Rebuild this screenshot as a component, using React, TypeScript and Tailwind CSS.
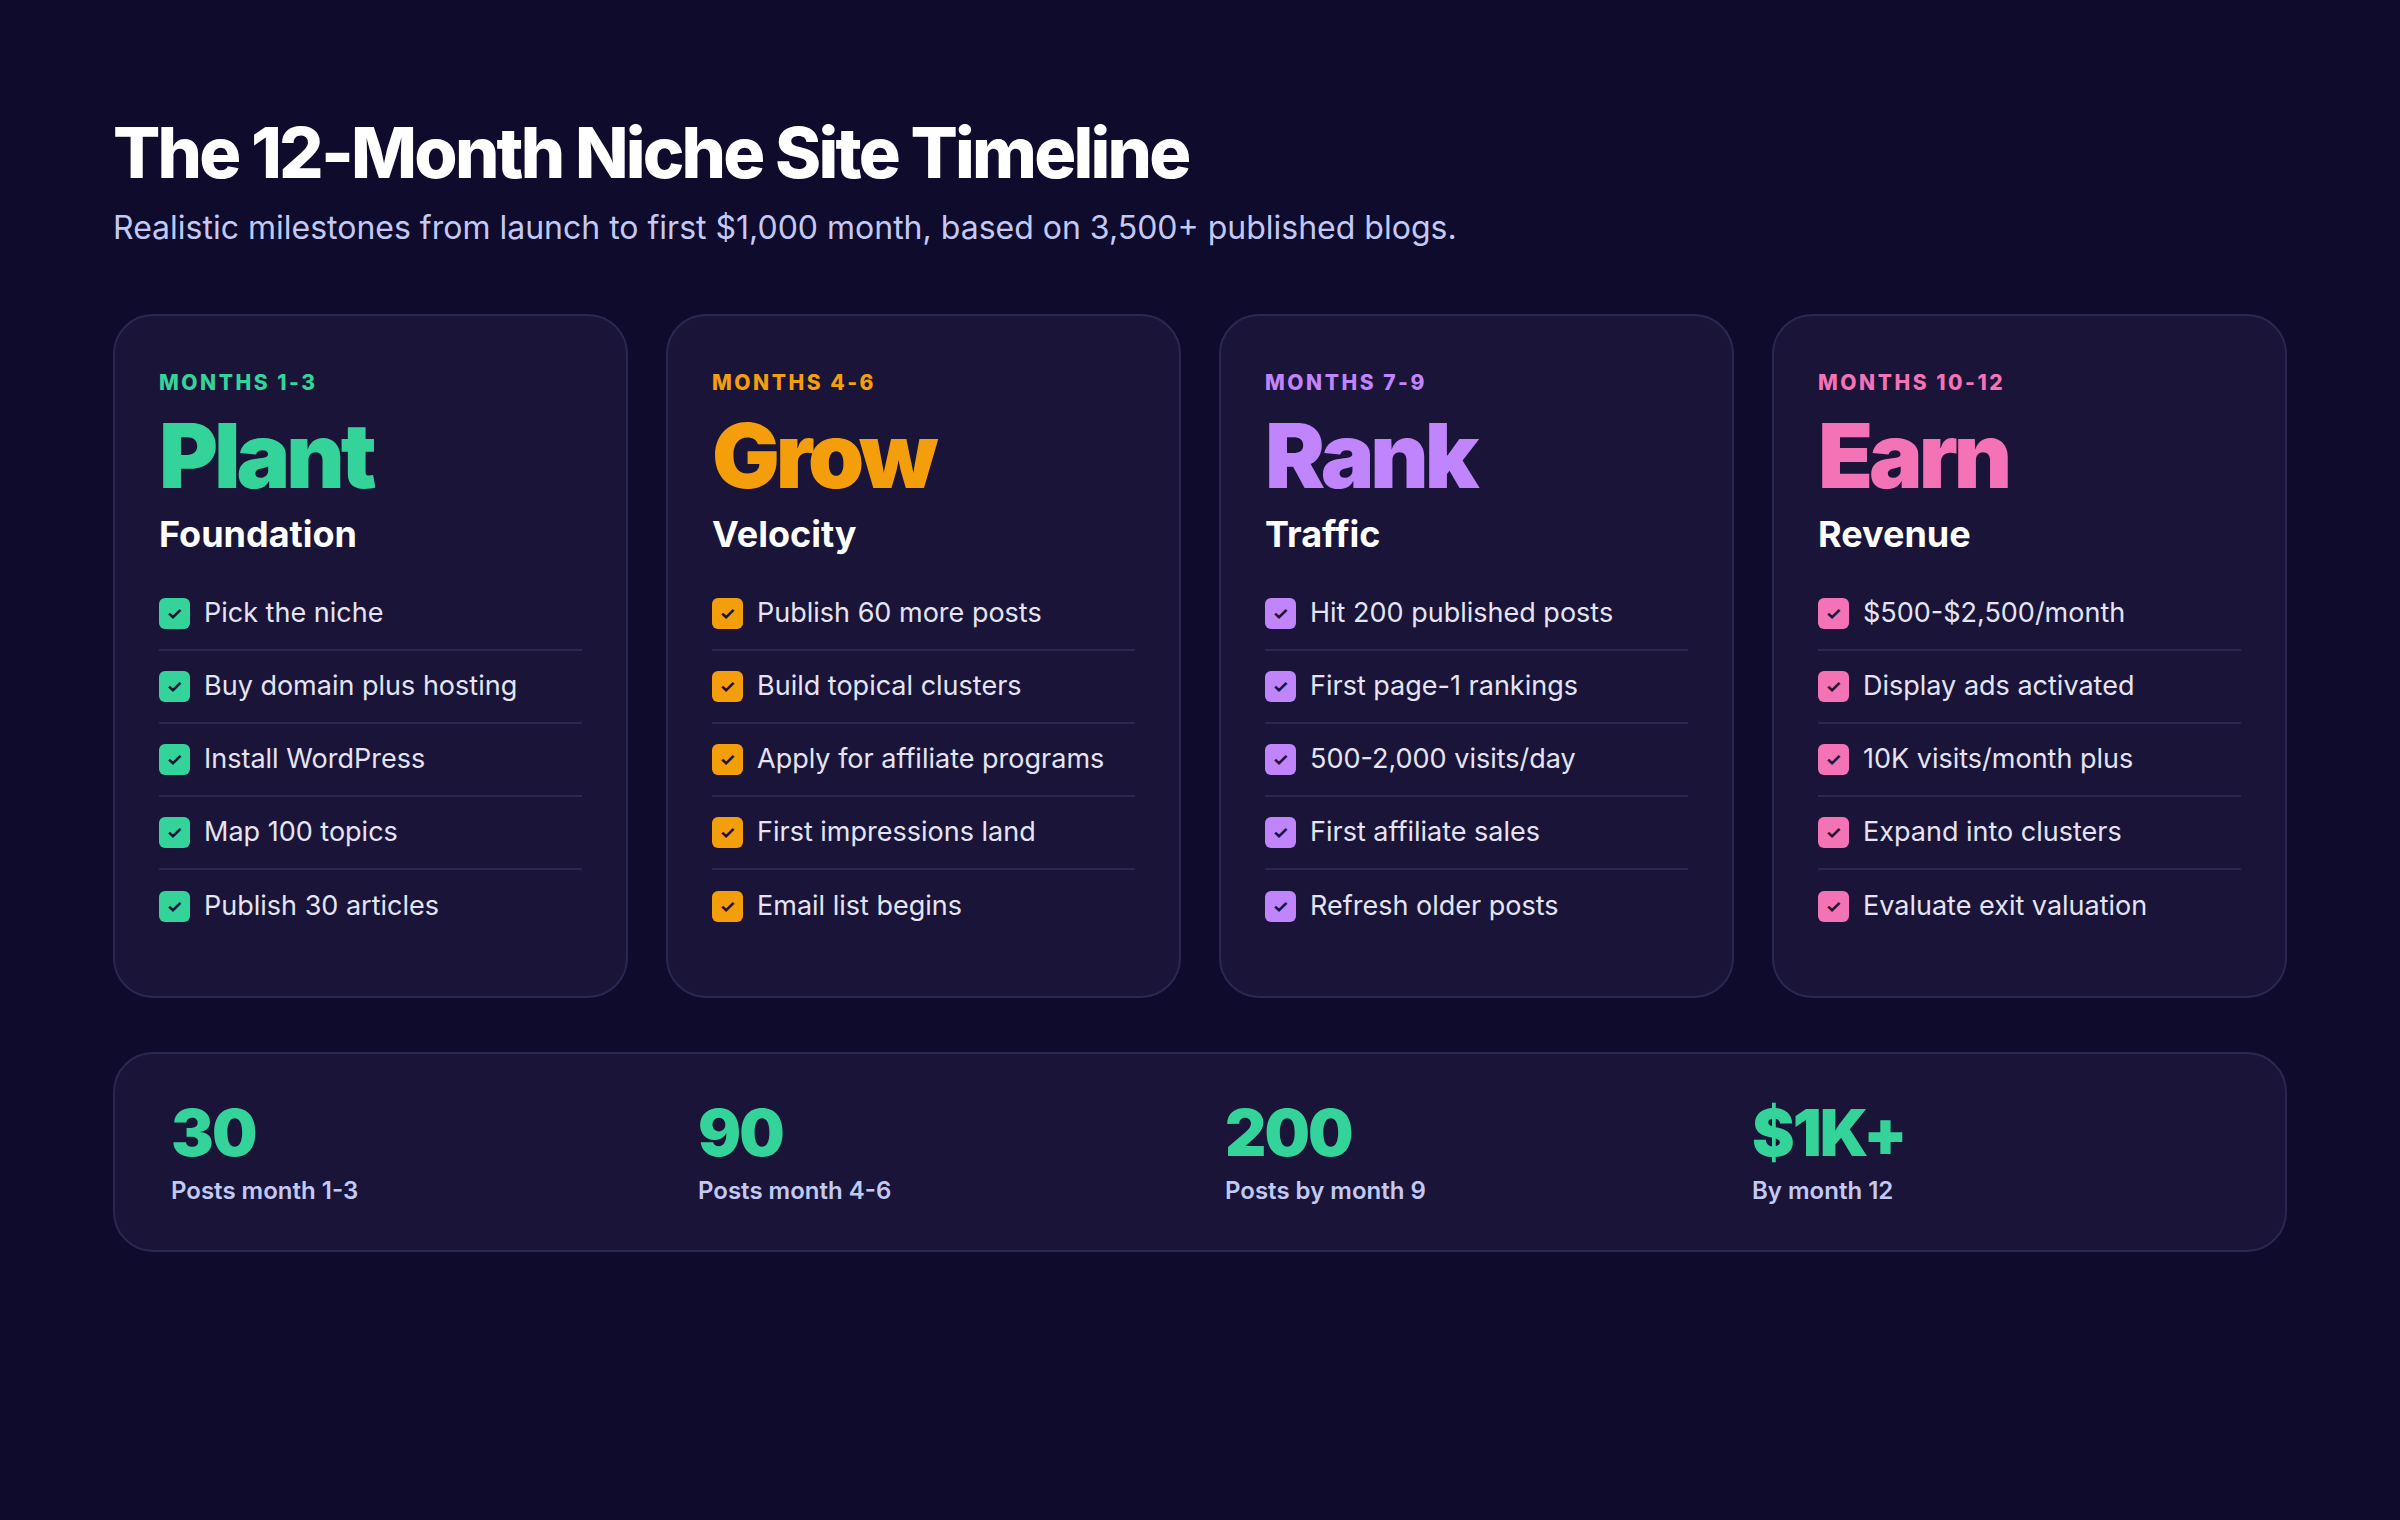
import React from 'react';

type Phase = {
  months: string;
  title: string;
  subtitle: string;
  color: string;
  box: string;
  items: string[];
};

const phases: Phase[] = [
  {
    months: 'MONTHS 1-3',
    title: 'Plant',
    subtitle: 'Foundation',
    color: 'text-[#34d399]',
    box: 'bg-[#34d399]',
    items: ['Pick the niche', 'Buy domain plus hosting', 'Install WordPress', 'Map 100 topics', 'Publish 30 articles'],
  },
  {
    months: 'MONTHS 4-6',
    title: 'Grow',
    subtitle: 'Velocity',
    color: 'text-[#f59e0b]',
    box: 'bg-[#f59e0b]',
    items: ['Publish 60 more posts', 'Build topical clusters', 'Apply for affiliate programs', 'First impressions land', 'Email list begins'],
  },
  {
    months: 'MONTHS 7-9',
    title: 'Rank',
    subtitle: 'Traffic',
    color: 'text-[#c084fc]',
    box: 'bg-[#c084fc]',
    items: ['Hit 200 published posts', 'First page-1 rankings', '500-2,000 visits/day', 'First affiliate sales', 'Refresh older posts'],
  },
  {
    months: 'MONTHS 10-12',
    title: 'Earn',
    subtitle: 'Revenue',
    color: 'text-[#f472b6]',
    box: 'bg-[#f472b6]',
    items: ['$500-$2,500/month', 'Display ads activated', '10K visits/month plus', 'Expand into clusters', 'Evaluate exit valuation'],
  },
];

const stats = [
  { value: '30', label: 'Posts month 1-3' },
  { value: '90', label: 'Posts month 4-6' },
  { value: '200', label: 'Posts by month 9' },
  { value: '$1K+', label: 'By month 12' },
];

export default function App() {
  return (
    <div className="min-h-screen w-full bg-[#0f0b2d] font-[Inter] text-white">
      <div className="px-[113px] pt-[118px] w-[2400px]">
        {/* Header */}
        <h1 className="text-[70px] font-extrabold tracking-[-0.04em] leading-none">
          The 12-Month Niche Site Timeline
        </h1>
        <p className="mt-[24px] text-[32px] text-[#c3c9f5] leading-none">
          Realistic milestones from launch to first $1,000 month, based on 3,500+ published blogs.
        </p>

        {/* Phase cards */}
        <div className="mt-[70px] grid grid-cols-4 gap-[38px]">
          {phases.map((p) => (
            <div
              key={p.title}
              className="h-[684px] rounded-[40px] border-2 border-[#2b2750] bg-[#1a1538] px-[44px] pt-[56px]"
            >
              <div className={`text-[21px] font-extrabold tracking-[0.12em] leading-none ${p.color}`}>
                {p.months}
              </div>
              <div className={`mt-[22px] text-[90px] font-black tracking-[-0.045em] leading-[0.9] ${p.color}`}>
                {p.title}
              </div>
              <div className="mt-[20px] text-[36px] font-bold leading-none">{p.subtitle}</div>
              <ul className="mt-[26px]">
                {p.items.map((item, i) => (
                  <li
                    key={item}
                    className={`flex h-[73px] items-center gap-[14px] ${i < p.items.length - 1 ? 'border-b-2 border-[#2b2750]' : ''}`}
                  >
                    <span
                      className={`flex h-[31px] w-[31px] shrink-0 items-center justify-center rounded-[6px] text-[18px] font-bold text-[#1a1538] ${p.box}`}
                    >
                      ✓
                    </span>
                    <span className="text-[27px] text-[#e4e4f4]">{item}</span>
                  </li>
                ))}
              </ul>
            </div>
          ))}
        </div>

        {/* Stats bar */}
        <div className="mt-[54px] grid h-[200px] grid-cols-[527px_527px_527px_1fr] items-center rounded-[40px] border-2 border-[#2b2750] bg-[#1a1538] px-[56px]">
          {stats.map((s) => (
            <div key={s.label}>
              <div className="text-[64px] font-black leading-none tracking-[-0.03em] text-[#34d399]">{s.value}</div>
              <div className="mt-[14px] text-[24px] font-semibold leading-none text-[#c3c9f5]">{s.label}</div>
            </div>
          ))}
        </div>
      </div>
    </div>
  );
}
